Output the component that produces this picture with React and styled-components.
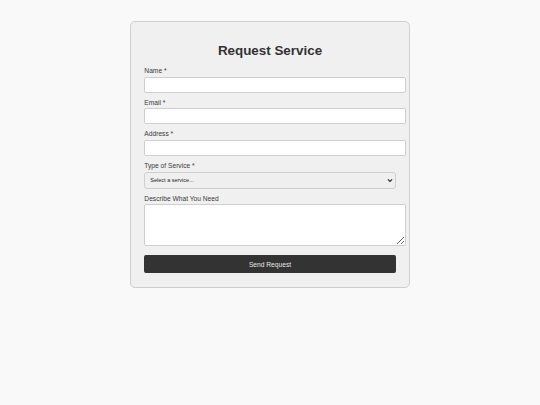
import React from "react";
import styled, { createGlobalStyle } from "styled-components";

const GlobalStyle = createGlobalStyle`
  html, body {
    margin: 0;
    padding: 0;
    background: #f9f9f9;
    font-family: "Liberation Sans", Arial, sans-serif;
    color: #333;
  }
`;

const Page = styled.div`
  display: flex;
  justify-content: center;
  padding-top: 21px;
  min-height: 405px;
  box-sizing: border-box;
`;

const Card = styled.form`
  width: 280px;
  box-sizing: border-box;
  padding: 13.33px;
  background: #f0f0f0;
  border: 1px solid #cfcfcf;
  border-radius: 5px;
  align-self: flex-start;
`;

const Title = styled.h2`
  margin: 8px 0 8.5px;
  text-align: center;
  font-size: 13.4px;
  font-weight: bold;
  line-height: 15.3px;
  color: #333;
`;

const Group = styled.div`
  margin-bottom: ${(p) => p.$gap || 6}px;
`;

const Label = styled.label`
  display: block;
  font-size: 6.67px;
  line-height: 7.66px;
  margin-bottom: ${(p) => p.$space || 2}px;
  color: #3a3a3a;
`;

const Input = styled.input`
  display: block;
  width: 100%;
  height: 8px;
  padding: 3px 4px;
  margin: 0;
  border: 1px solid #cfcfcf;
  border-radius: 2px;
  background: #fff;
  font-family: inherit;
  font-size: 6.67px;
  outline: none;
`;

const SelectWrap = styled.div`
  position: relative;
  width: 100%;
`;

const Select = styled.select`
  display: block;
  width: 100%;
  height: 16.4px;
  box-sizing: border-box;
  margin: 0;
  padding: 0 12px 0 5px;
  border: 1px solid #cfcfcf;
  border-radius: 3px;
  background: #efefef;
  appearance: none;
  font-family: inherit;
  font-size: 5.5px;
  color: #222;
  outline: none;
`;

const Chevron = styled.svg`
  position: absolute;
  right: 3px;
  top: 6px;
  width: 6px;
  height: 5px;
  pointer-events: none;
`;

const TextArea = styled.textarea`
  display: block;
  width: 100%;
  height: 31.7px;
  padding: 4px;
  margin: 0;
  border: 1px solid #cfcfcf;
  border-radius: 2px;
  background: #fff;
  font-family: inherit;
  font-size: 6.67px;
  outline: none;
  resize: vertical;
`;

const Button = styled.button`
  display: block;
  width: 100%;
  height: 18px;
  margin: 0;
  padding: 0;
  border: none;
  border-radius: 2px;
  background: #333;
  color: #e6e6e6;
  font-family: inherit;
  font-size: 6.67px;
  cursor: pointer;
`;

const fields = [
  { id: "name", label: "Name *", type: "text" },
  { id: "email", label: "Email *", type: "email" },
  { id: "address", label: "Address *", type: "text" },
];

export default function App() {
  return (
    <>
      <GlobalStyle />
      <Page>
        <Card onSubmit={(e) => e.preventDefault()}>
          <Title>Request Service</Title>
          {fields.map((f) => (
            <Group key={f.id}>
              <Label htmlFor={f.id}>{f.label}</Label>
              <Input id={f.id} type={f.type} />
            </Group>
          ))}
          <Group>
            <Label htmlFor="service" $space={2.4}>Type of Service *</Label>
            <SelectWrap>
              <Select id="service" defaultValue="">
                <option value="">Select a service...</option>
                <option value="plumbing">Plumbing</option>
                <option value="electrical">Electrical</option>
                <option value="cleaning">Cleaning</option>
              </Select>
              <Chevron viewBox="0 0 10 8">
                <path d="M1.5 2 L5 5.5 L8.5 2" fill="none" stroke="#222" strokeWidth="1.8" />
              </Chevron>
            </SelectWrap>
          </Group>
          <Group $gap={9.3}>
            <Label htmlFor="details">Describe What You Need</Label>
            <TextArea id="details" />
          </Group>
          <Button type="submit">Send Request</Button>
        </Card>
      </Page>
    </>
  );
}
